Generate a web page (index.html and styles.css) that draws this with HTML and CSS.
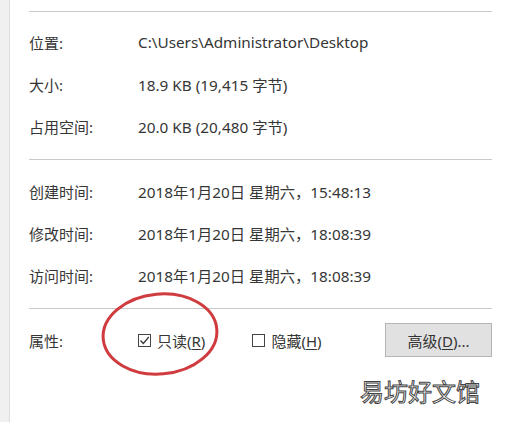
FILE: index.html
```html
<!DOCTYPE html>
<html lang="zh-CN">
	<head>
		<meta charset="UTF-8" />
		<title>属性</title>
		<link rel="stylesheet" href="styles.css">
	</head>
	<body>
		<div class="window">
			<div class="side"></div>
			<div class="content">
				<div class="section">
					<div class="row"><span class="label">位置:</span><span class="value">C:\Users\Administrator\Desktop</span></div>
					<div class="row"><span class="label">大小:</span><span class="value">18.9 KB (19,415 字节)</span></div>
					<div class="row"><span class="label">占用空间:</span><span class="value">20.0 KB (20,480 字节)</span></div>
				</div>
				<div class="section">
					<div class="row"><span class="label">创建时间:</span><span class="value">2018年1月20日 星期六，15:48:13</span></div>
					<div class="row"><span class="label">修改时间:</span><span class="value">2018年1月20日 星期六，18:08:39</span></div>
					<div class="row"><span class="label">访问时间:</span><span class="value">2018年1月20日 星期六，18:08:39</span></div>
				</div>
				<div class="section attrs">
					<div class="row">
						<span class="label">属性:</span>
						<label class="check">
							<span class="box">
								<svg width="11" height="11" viewBox="0 0 11 11"><path d="M1.5 5.5 L4.3 8.5 L9.8 2" fill="none" stroke="#333" stroke-width="1.2"/></svg>
							</span>
							<span>只读(<u>R</u>)</span>
						</label>
						<label class="check hidden-check">
							<span class="box"></span>
							<span>隐藏(<u>H</u>)</span>
						</label>
						<button class="adv">高级(<u>D</u>)...</button>
					</div>
					<svg class="circle" width="126" height="90" viewBox="0 0 126 90">
						<ellipse cx="63" cy="45" rx="57" ry="40" transform="rotate(-5 63 45)" fill="none" stroke="#cf3b3e" stroke-width="3"/>
					</svg>
				</div>
				<div class="watermark">易坊好文馆</div>
			</div>
		</div>
	</body>
</html>
```

FILE: styles.css
```css
body {
	margin: 0;
	background: #fff;
	font-family: "Noto Sans", "Noto Sans CJK SC", sans-serif;
	font-size: 15px;
	color: #363636;
}
.window {
	display: flex;
	height: 422px;
	overflow: hidden;
}
.side {
	width: 9px;
	background: #f0f0f0;
	border-right: 1px solid #dcdcdc;
	flex-shrink: 0;
}
.content {
	position: relative;
	flex: 1;
	padding: 11px 15px 0 19px;
}
.section {
	border-top: 1px solid #c9c9c9;
	padding: 9px 0 12px;
}
.section + .section {
	padding: 10px 0 12px;
}
.row {
	display: flex;
	align-items: center;
	height: 42px;
}
.label {
	width: 109px;
	flex-shrink: 0;
}
.value {
	font-size: 15.3px;
}
.section.attrs {
	position: relative;
	padding-top: 10px;
}
.check {
	display: flex;
	align-items: center;
	gap: 6px;
}
.check u,
.adv u {
	text-decoration: underline;
	text-underline-offset: 2px;
}
.box {
	width: 11px;
	height: 11px;
	border: 1px solid #444;
	display: flex;
	align-items: center;
	justify-content: center;
}
.hidden-check {
	margin-left: 47px;
}
.adv {
	margin-left: auto;
	width: 107px;
	height: 34px;
	background: #e1e1e1;
	border: 1px solid #b4b4b4;
	font-family: inherit;
	font-size: 15px;
	color: #333;
	padding: 0;
}
.circle {
	position: absolute;
	left: 68px;
	top: -20px;
}
.watermark {
	position: absolute;
	left: 350px;
	top: 373px;
	font-family: "Noto Sans CJK SC", sans-serif;
	font-size: 24px;
	color: #fff;
	-webkit-text-stroke: 1px #444;
}
```
